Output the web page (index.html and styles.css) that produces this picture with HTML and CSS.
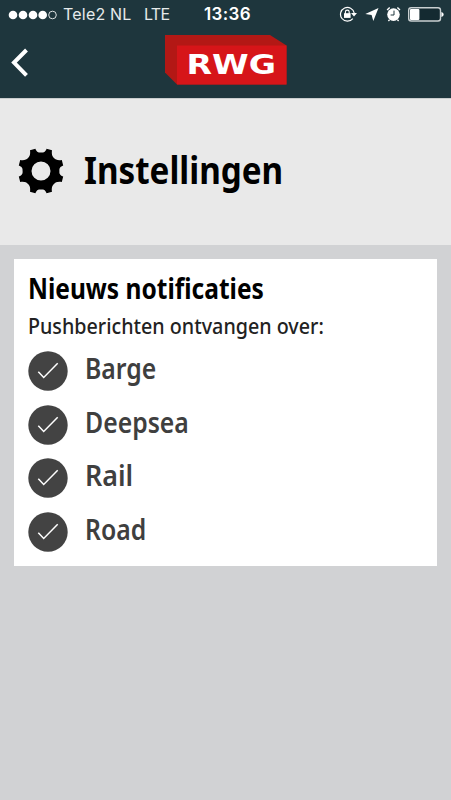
FILE: index.html
```html
<!DOCTYPE html>
<html lang="nl">
<head>
<meta charset="utf-8">
<title>Instellingen</title>
<link rel="stylesheet" href="styles.css">
</head>
<body>
<header class="top">
  <div class="status">
    <svg class="signal" width="50" height="10" viewBox="0 0 50 10"><g fill="#fff"><circle cx="5" cy="5" r="4.3"/><circle cx="15" cy="5" r="4.3"/><circle cx="25" cy="5" r="4.3"/><circle cx="34.7" cy="5" r="4.3"/></g><circle cx="44.5" cy="5" r="3.8" fill="none" stroke="#dce1e2" stroke-width="1"/></svg>
    <span class="carrier">Tele2 NL</span>
    <span class="network">LTE</span>
    <span class="time">13:36</span>
    <svg class="indicators" width="106" height="18" viewBox="339 6 106 18">
      <path d="M352.8 18.6A6.9 6.9 0 1 1 354.2 13" fill="none" stroke="#fff" stroke-width="1.2"/>
      <path d="M351 12.9h6l-3 3.7z" fill="#fff"/>
      <path d="M344 13.2h6.6v4.7H344z" fill="#fff"/>
      <path d="M345.4 14v-2a1.9 1.9 0 0 1 3.8 0v2" fill="none" stroke="#fff" stroke-width="1.1"/>
      <path d="M378.5 8l-5.2 13.1-1.7-6.2-6.3-1z" fill="#fff"/>
      <circle cx="393.5" cy="14.6" r="6.3" fill="#fff"/>
      <path d="M394 10.6v4.4h-3.4" fill="none" stroke="#1e363d" stroke-width="1"/>
      <path d="M387.1 10l2.6-2.4M397.4 7.6l2.6 2.4M389.6 19.6l-1.2 1.4M397.4 19.6l1.2 1.4" stroke="#fff" stroke-width="1.4"/>
      <rect x="408.7" y="7.8" width="31.8" height="13.2" rx="2.5" fill="#142a31" stroke="#c9cfd1" stroke-width="1.4"/>
      <rect x="410" y="9" width="9.4" height="11" rx="1" fill="#fff"/>
      <path d="M441.4 12c3 .8 3 4.2 0 5z" fill="#fff"/>
    </svg>
  </div>
  <div class="nav">
    <svg class="back" width="20" height="30" viewBox="0 0 20 30"><path d="M17.5 2L5 14.6 17.5 27.4" fill="none" stroke="#fff" stroke-width="4"/></svg>
    <svg class="logo" width="122" height="50" viewBox="0 0 122 50">
      <path d="M0 0h105l16.5 10.5V49.5H12L0 37.5z" fill="#b31815"/>
      <path d="M12 10.5h109.5v39H12z" fill="#d61519"/>
      <text class="logo-text" x="21.5" y="39" textLength="89.5" lengthAdjust="spacingAndGlyphs">RWG</text>
    </svg>
  </div>
</header>
<section class="title">
  <svg class="gear" width="46" height="46" viewBox="-23 -23 46 46">
    <path fill="#000" fill-rule="evenodd" d="M-11-20.8L-5.6-22.2C-4-18-1.8-18.4 0-18.4S4-18 5.6-22.2L11-20.8C10.4-16.4 11.4-14.6 13-13S16.4-10.4 20.8-11L22.2-5.6C18-4 18.4-1.8 18.4 0S18 4 22.2 5.6L20.8 11C16.4 10.4 14.6 11.4 13 13S10.4 16.4 11 20.8L5.6 22.2C4 18 1.8 18.4 0 18.4S-4 18-5.6 22.2L-11 20.8C-10.4 16.4-11.4 14.6-13 13S-16.4 10.4-20.8 11L-22.2 5.6C-18 4-18.4 1.8-18.4 0S-18-4-22.2-5.6L-20.8-11C-16.4-10.4-14.6-11.4-13-13S-10.4-16.4-11-20.8zM9.5 0A9.5 9.5 0 1 0-9.5 0A9.5 9.5 0 1 0 9.5 0z"/>
  </svg>
  <h1>Instellingen</h1>
</section>
<main class="card">
  <h2>Nieuws notificaties</h2>
  <p>Pushberichten ontvangen over:</p>
  <ul>
    <li><svg class="check" viewBox="0 0 40 40"><circle cx="20" cy="20" r="19.7"/><path d="M10.3 20.7l5.4 5.8L29.7 12.3"/></svg><span class="label">Barge</span></li>
    <li><svg class="check" viewBox="0 0 40 40"><circle cx="20" cy="20" r="19.7"/><path d="M10.3 20.7l5.4 5.8L29.7 12.3"/></svg><span class="label">Deepsea</span></li>
    <li><svg class="check" viewBox="0 0 40 40"><circle cx="20" cy="20" r="19.7"/><path d="M10.3 20.7l5.4 5.8L29.7 12.3"/></svg><span class="label rail">Rail</span></li>
    <li><svg class="check" viewBox="0 0 40 40"><circle cx="20" cy="20" r="19.7"/><path d="M10.3 20.7l5.4 5.8L29.7 12.3"/></svg><span class="label">Road</span></li>
  </ul>
</main>
</body>
</html>
```
FILE: styles.css
```css
* { box-sizing: border-box; margin: 0; padding: 0; }
body { height: 800px; background: #d1d2d4; font-family: "Noto Sans", sans-serif; overflow: hidden; }
svg { display: block; flex: none; }
.top { height: 98px; background: #1e363d; color: #fff; }
.status { display: grid; grid-template-columns: 55px 81px 60px 135px 106px; height: 29px; padding-left: 8px; align-items: center; font: 16px/29px Inter, sans-serif; white-space: nowrap; }
.carrier, .network { color: #e6eaeb; }
.carrier { letter-spacing: .2px; }
.network { letter-spacing: -.7px; }
.time { font-weight: 600; font-size: 17px; letter-spacing: .4px; }
.nav { display: flex; align-items: flex-start; height: 69px; padding: 6px 0 0 9px; }
.back { margin-top: 13px; }
.logo { margin-left: 136px; }
.logo-text { font: 700 26px "DejaVu Sans", sans-serif; fill: #fff; }
.title { display: flex; align-items: center; gap: 20px; height: 147px; padding-left: 18px; padding-bottom: 2px; background: #e9e9e9; border-top: 1px solid #c9cdce; }
h1, h2, p, .label { white-space: nowrap; transform-origin: 0 50%; }
h1 { font-size: 37.5px; line-height: 50px; transform: translateY(-1px) scaleX(.886); }
.card { width: 423px; height: 307px; margin: 14px; padding: 11px 14px; background: #fff; }
h2 { font-size: 28px; line-height: 38px; transform: translateY(-1px) scaleX(.876); }
p { font-size: 21px; line-height: 36px; font-weight: 500; color: #222; transform: scaleX(.938); }
ul { list-style: none; padding-top: 7px; }
li { display: flex; align-items: center; gap: 17px; height: 40px; margin-bottom: 13.5px; }
.check { width: 40px; height: 40px; }
.check circle { fill: #434343; }
.check path { fill: none; stroke: #fff; stroke-width: 1.5; }
.label { font-size: 28px; line-height: 38px; font-weight: 600; color: #3f3f3f; transform: translateY(-3px) scaleX(.885); }
.rail { transform: translateY(-3px) scaleX(.96); }
```
